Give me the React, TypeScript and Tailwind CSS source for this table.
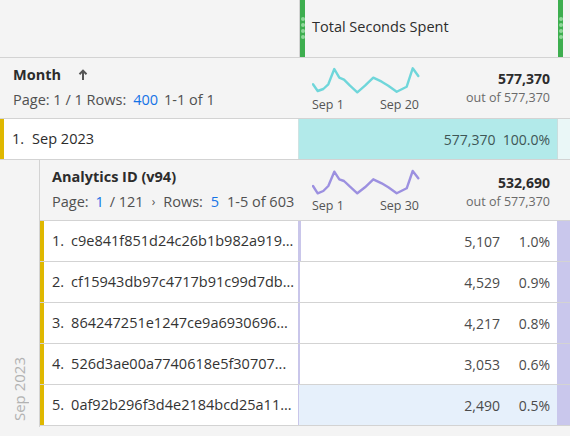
import React from "react";

const teal = "#6fd6da";
const purple = "#9c90e0";

function Spark({ color, pts }: { color: string; pts: string }) {
  return (
    <svg width="110" height="30" viewBox="0 0 110 30" className="block">
      <polyline points={pts} fill="none" stroke={color} strokeWidth="2.4" strokeLinejoin="round" strokeLinecap="round" />
    </svg>
  );
}

const monthPts =
  "1,18.3 5.7,25 11.3,23 16.3,18.3 22.3,3 27.3,11.7 32,13.7 38,19.7 45.3,26.3 53,19.7 61.3,11.7 69.7,15.7 76.3,19.7 84.7,25.7 94.7,20.7 100.7,2.3 106.3,10";
const idPts =
  "1,17 5.7,24.3 11.3,22 16.3,17 22.3,2.7 27.3,10.3 32,12 38,17.7 45.3,24.3 53,18.3 61.3,10.3 69.7,14.3 76.3,18.3 84.7,24.3 94.7,19.3 100.7,2 106.3,9.3";

function GreenBar() {
  return (
    <div className="w-[5px] h-full bg-[#3dae4f] flex flex-col items-center pt-[17px] gap-[2px]">
      <div className="w-[4px] h-[4px] rounded-full bg-[#8fd89a]" />
      <div className="w-[4px] h-[4px] rounded-full bg-[#8fd89a]" />
      <div className="w-[4px] h-[4px] rounded-full bg-[#8fd89a]" />
      <div className="w-[4px] h-[4px] rounded-full bg-[#8fd89a]" />
    </div>
  );
}

const rows = [
  { id: "c9e841f851d24c26b1b982a919...", v: "5,107", p: "1.0%", pct: 1.0 },
  { id: "cf15943db97c4717b91c99d7db...", v: "4,529", p: "0.9%", pct: 0.9 },
  { id: "864247251e1247ce9a6930696...", v: "4,217", p: "0.8%", pct: 0.8 },
  { id: "526d3ae00a7740618e5f30707...", v: "3,053", p: "0.6%", pct: 0.6 },
  { id: "0af92b296f3d4e2184bcd25a11...", v: "2,490", p: "0.5%", pct: 0.5 },
];

export default function App() {
  return (
    <div className="w-[570px] h-[436px] overflow-hidden bg-[#f4f4f4] text-[#2c2c2c] font-['Open_Sans',sans-serif] text-[14.5px]">
      {/* column header */}
      <div className="flex h-[58px] border-b border-[#d3d3d3]">
        <div className="w-[300px] border-r border-[#d3d3d3]" />
        <GreenBar />
        <div className="flex-1 flex items-center pl-[7px] pb-[3px] text-[#2c2c2c]">Total Seconds Spent</div>
        <GreenBar />
        <div className="w-[7px]" />
      </div>

      {/* Month section */}
      <div className="flex h-[61px] border-b border-[#d3d3d3]">
        <div className="w-[300px] flex flex-col pl-[13px] pt-[6px] gap-[4px]">
          <div className="flex items-center h-[21px]">
            <span className="font-bold">Month</span>
            <svg width="10" height="12" viewBox="0 0 10 12" className="ml-[17px]">
              <path d="M5 11V2M1.5 5.2L5 1.6l3.5 3.6" fill="none" stroke="#555" strokeWidth="2" />
            </svg>
          </div>
          <div className="h-[21px] flex items-center text-[#505050] whitespace-pre">
            Page: 1 / 1 Rows:<span className="text-[#1473e6] ml-[7px] mr-[6px]">400</span>1-1 of 1
          </div>
        </div>
        <div className="flex-1 flex pr-[20px]">
          <div className="flex flex-col pl-[12px] pt-[8px]">
            <Spark color={teal} pts={monthPts} />
            <div className="flex w-[110px] justify-between text-[12.5px] text-[#555] leading-[16px] mt-[1px] pr-[3px]">
              <span>Sep 1</span>
              <span>Sep 20</span>
            </div>
          </div>
          <div className="flex-1 flex flex-col items-end pt-[11px]">
            <span className="font-bold text-[14px] leading-[20px]">577,370</span>
            <span className="text-[#6a6a6a] text-[12.5px] leading-[18px]">out of 577,370</span>
          </div>
        </div>
      </div>

      {/* Sep 2023 row */}
      <div className="flex h-[41px] border-b border-[#d3d3d3]">
        <div className="w-[298px] bg-white flex items-center">
          <div className="w-[4px] h-full bg-[#dfb800]" />
          <span className="ml-[8px]">1.</span>
          <span className="ml-[8px]">Sep 2023</span>
        </div>
        <div className="w-[259px] bg-[#b2eaea] border-l border-[#cfe3e3] flex items-center justify-end pr-[7px] text-[#3e5656] text-[14px] whitespace-pre">
          577,370  100.0%
        </div>
        <div className="flex-1 bg-[#eaf7f7] border-l border-[#c9dede]" />
      </div>

      {/* nested */}
      <div className="flex">
        <div className="w-[40px] border-r border-[#d3d3d3] flex flex-col justify-end items-center pb-[6px] h-[267px]">
          <span className="[writing-mode:vertical-rl] rotate-180 text-[#b2b2b2] text-[15px] leading-none">Sep 2023</span>
        </div>
        <div className="flex-1 flex flex-col">
          {/* header */}
          <div className="flex h-[61px] border-b border-[#d3d3d3]">
            <div className="w-[258px] flex flex-col pl-[12px] pt-[6px] gap-[4px]">
              <div className="h-[21px] flex items-center font-bold">Analytics ID (v94)</div>
              <div className="h-[21px] flex items-center text-[#505050] whitespace-pre">
                Page: <span className="text-[#1473e6] ml-[3px] mr-[6px]">1</span>/ 121
                <span className="mx-[8px] text-[12px] text-[#555]">›</span>Rows: <span className="text-[#1473e6] ml-[4px] mr-[8px]">5</span>1-5 of 603
              </div>
            </div>
            <div className="flex-1 flex pr-[20px]">
              <div className="flex flex-col pl-[14px] pt-[9px]">
                <Spark color={purple} pts={idPts} />
                <div className="flex w-[110px] justify-between text-[12.5px] text-[#555] leading-[16px] mt-[-1px] pr-[3px]">
                  <span>Sep 1</span>
                  <span>Sep 30</span>
                </div>
              </div>
              <div className="flex-1 flex flex-col items-end pt-[13px]">
                <span className="font-bold text-[14px] leading-[20px]">532,690</span>
                <span className="text-[#6a6a6a] text-[12.5px] leading-[18px]">out of 577,370</span>
              </div>
            </div>
          </div>
          {rows.map((r, i) => (
            <div key={i} className="flex h-[41px] border-b border-[#d3d3d3]">
              <div className="w-[258px] bg-white flex items-center">
                <div className="w-[4px] h-full bg-[#dfb800]" />
                <span className="ml-[8px] text-[#333]">{i + 1}.</span>
                <span className="ml-[7px] text-[#333] whitespace-nowrap">{r.id}</span>
              </div>
              <div className={`w-[259px] flex items-center ${i === 4 ? "bg-[#e6f0fb]" : "bg-white"}`}>
                <div className="h-full bg-[#c9c6ea]" style={{ width: `${(r.pct / 100) * 259}px` }} />
                <div className="flex-1 flex justify-end items-center pr-[7px] text-[#4b4b4b] text-[14px]">
                  <span>{r.v}</span>
                  <span className="w-[50px] text-right">{r.p}</span>
                </div>
              </div>
              <div className="flex-1 bg-[#c9c7ec]" />
            </div>
          ))}
        </div>
      </div>
    </div>
  );
}
